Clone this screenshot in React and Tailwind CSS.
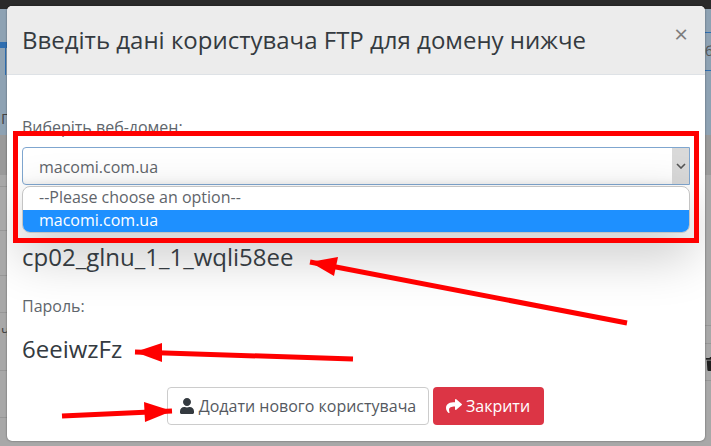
import { FaUser, FaShare, FaTrash } from "react-icons/fa";

function Arrow({ tail, tip, wingA, wingB }) {
  return (
    <>
      <line x1={tail[0]} y1={tail[1]} x2={tip[0]} y2={tip[1]} stroke="#ff0000" strokeWidth="5" />
      <polygon points={`${tip[0]},${tip[1]} ${wingA[0]},${wingA[1]} ${wingB[0]},${wingB[1]}`} fill="#ff0000" />
    </>
  );
}

// only thin strips of the dimmed page show on each side of the modal
function PageBehind() {
  return (
    <div className="flex flex-col h-full">
      <div className="h-[9px] bg-[#2a2a2a]"></div>
      <div className="h-[126px] bg-[#8ea2b3] flex justify-between">
        <div className="w-[7px] flex flex-col overflow-hidden">
          <div className="mt-[33px] h-[6px] bg-[#2f6eb0]"></div>
          <div className="h-[27px] w-[6px] border-r border-[#2f6eb0]"></div>
          <div className="mt-[33px] text-[15px] leading-5 pl-px text-[#444]">Г</div>
        </div>
        <div className="w-[6px] flex flex-col overflow-hidden">
          <div className="mt-[23px] h-[39px] border-y border-[#2f6eb0] text-[#555] text-sm whitespace-nowrap">
            <span className="block pt-2">ба</span>
          </div>
        </div>
      </div>
      <div className="h-[40px] bg-[#9a9a9a]"></div>
      <div className="flex-1 bg-[#a8a8a8] flex justify-between">
        <div className="w-[7px] flex flex-col">
          <div className="h-[12px] border-b border-[#979797]"></div>
          <div className="h-[44px] border-b border-[#979797]"></div>
          <div className="h-[45px] border-b border-[#979797]"></div>
          <div className="h-[37px] border-b border-[#979797]"></div>
          <div className="h-[58px] border-b border-[#979797] text-[#444] text-sm leading-[36px] pl-px overflow-hidden">ч</div>
          <div className="h-[47px] border-b border-[#979797]"></div>
        </div>
        <div className="w-[6px] flex flex-col">
          <div className="h-[151px] border-b border-[#979797]"></div>
          <div className="h-[18px] border-b border-[#979797]"></div>
          <div className="h-[37px] border-b border-[#979797] flex items-end overflow-hidden pb-[9px]">
            <FaTrash className="text-[#1f1f1f] text-sm shrink-0" />
          </div>
        </div>
      </div>
    </div>
  );
}

export default function App() {
  return (
    <div className="relative w-[711px] h-[446px] overflow-hidden font-['Open_Sans',sans-serif]">
      <PageBehind />

      {/* modal */}
      <div className="absolute left-[7px] top-[6px] w-[698px] h-[435px] bg-white rounded-[5px] overflow-hidden flex flex-col text-[#343a40] shadow-[0_0_2px_rgba(0,0,0,0.5)]">
        <div className="h-[69px] shrink-0 bg-[#ececec] border-b border-[#dee2e6] flex justify-between pl-4 pr-4">
          <h5 className="text-[24px] leading-[34px] mt-[17px] font-normal whitespace-nowrap -ml-px">
            Введіть дані користувача FTP для домену нижче
          </h5>
          <span className="text-[24px] leading-6 mt-[16px] mr-px text-[#7d7d7d]">×</span>
        </div>

        <div className="flex-1 flex flex-col px-[15px]">
          <label className="text-base leading-5 mt-[42px] text-[#60666c]">Виберіть веб-домен:</label>
          <div className="mt-[10px] h-[38px] border border-[#7fa6cf] rounded-l-[4px] flex justify-between items-stretch pl-4 text-base text-[#5f656b] shadow-[inset_0_-8px_8px_-8px_rgba(0,0,0,0.1)]">
            <span className="leading-[38px]">macomi.com.ua</span>
            <div className="w-[17px] bg-[#d9d9d9] flex items-center justify-center">
              <svg width="10" height="6" viewBox="0 0 10 6" fill="none" stroke="#555" strokeWidth="1.6">
                <path d="M1 1l4 4 4-4" />
              </svg>
            </div>
          </div>
          <div className="mt-[1px] h-[47px] border border-[#c4c4c4] rounded-[8px] overflow-hidden flex flex-col text-base leading-[21px] shadow-[0_20px_50px_5px_rgba(0,0,0,0.2)] bg-white">
            <div className="h-[23px] pl-4 text-[#5f656b]">--Please choose an option--</div>
            <div className="flex-1 pl-4 bg-[#1e90ff] text-white">macomi.com.ua</div>
          </div>
          <div className="text-[24px] leading-8 mt-[8px]">cp02_glnu_1_1_wqli58ee</div>
          <label className="text-base leading-5 mt-[23px] text-[#60666c]">Пароль:</label>
          <div className="text-[24px] leading-8 mt-[17px]">6eeiwzFz</div>
          <div className="flex justify-center gap-1 mt-[22px] text-base pr-[2px]">
            <button className="h-[38px] w-[262px] border border-[#ccc] rounded-[4px] bg-white text-[#55595f] flex items-center justify-center gap-1">
              <FaUser className="text-[#343a40] text-[16px]" />
              Додати нового користувача
            </button>
            <button className="h-[38px] w-[111px] rounded-[4px] bg-[#dc3545] text-white flex items-center justify-center gap-1">
              <FaShare className="text-[16px]" />
              Закрити
            </button>
          </div>
        </div>
      </div>

      {/* annotations drawn on top of the screenshot */}
      <div className="absolute left-[13px] top-[131px] w-[686px] h-[112px] border-[5px] border-[#ff0000]"></div>
      <svg className="absolute inset-0" width="711" height="446">
        <Arrow tail={[627, 323]} tip={[310, 262]} wingA={[338, 257]} wingB={[334, 276]} />
        <Arrow tail={[353, 359]} tip={[135, 352]} wingA={[162, 343]} wingB={[162, 362]} />
        <Arrow tail={[62, 416]} tip={[172, 411]} wingA={[144, 402]} wingB={[145, 422]} />
      </svg>
    </div>
  );
}
